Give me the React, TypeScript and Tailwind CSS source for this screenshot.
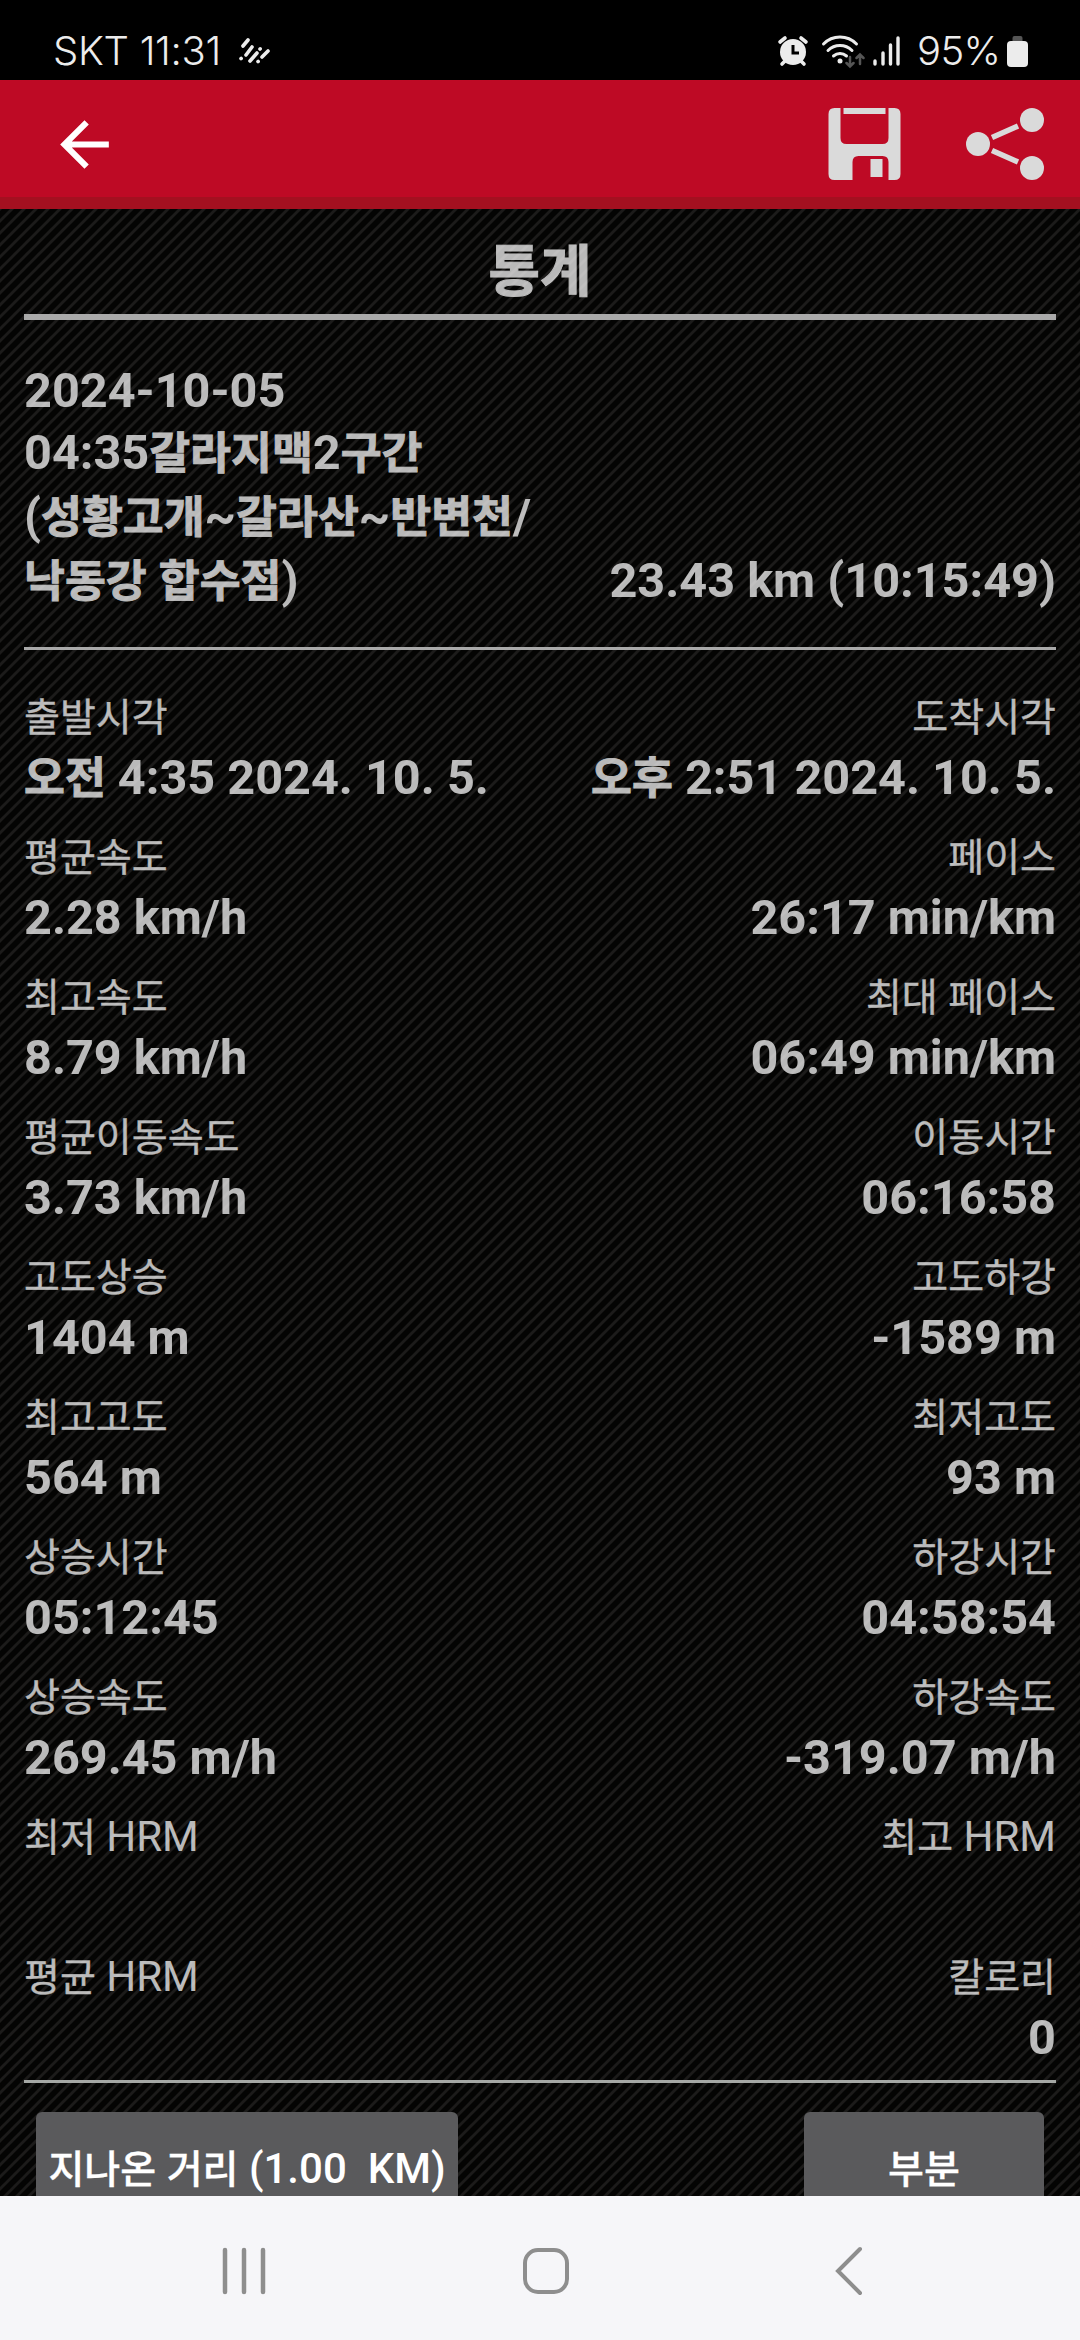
import React from 'react';

interface StatRow {
  left: string;
  leftValue: string;
  right: string;
  rightValue: string;
}

const rows: StatRow[] = [
  { left: '출발시각', leftValue: '오전 4:35 2024. 10. 5.', right: '도착시각', rightValue: '오후 2:51 2024. 10. 5.' },
  { left: '평균속도', leftValue: '2.28 km/h', right: '페이스', rightValue: '26:17 min/km' },
  { left: '최고속도', leftValue: '8.79 km/h', right: '최대 페이스', rightValue: '06:49 min/km' },
  { left: '평균이동속도', leftValue: '3.73 km/h', right: '이동시간', rightValue: '06:16:58' },
  { left: '고도상승', leftValue: '1404 m', right: '고도하강', rightValue: '-1589 m' },
  { left: '최고고도', leftValue: '564 m', right: '최저고도', rightValue: '93 m' },
  { left: '상승시간', leftValue: '05:12:45', right: '하강시간', rightValue: '04:58:54' },
  { left: '상승속도', leftValue: '269.45 m/h', right: '하강속도', rightValue: '-319.07 m/h' },
  { left: '최저 HRM', leftValue: '', right: '최고 HRM', rightValue: '' },
  { left: '평균 HRM', leftValue: '', right: '칼로리', rightValue: '0' },
];

// Hangul is set slightly smaller than the Latin text beside it
function Mixed({ text, heavy }: { text: string; heavy?: boolean }) {
  return (
    <>
      {text.split(/([가-힣]+)/).map((part, idx) =>
        idx % 2 === 1 ? (
          <span key={idx} className={heavy ? 'text-[0.915em] leading-none [-webkit-text-stroke:0.9px]' : 'text-[0.93em] leading-none [-webkit-text-stroke:0.3px]'}>
            {part}
          </span>
        ) : (
          part
        )
      )}
    </>
  );
}

function StatusBar() {
  return (
    <div className="flex h-20 shrink-0 items-center bg-black pt-[22px] pr-[52px] pl-[53px] font-['Inter','Noto_Sans_CJK_KR',sans-serif] text-[40px] leading-none font-light text-[#ececec]">
      <span className="w-[169px] shrink-0 tracking-[-0.3px] whitespace-nowrap">SKT 11:31</span>
      <svg className="ml-4 h-7 w-8" viewBox="0 0 32 28" fill="none" stroke="#ececec" strokeWidth="3.600" strokeLinecap="round">
        <path d="M5 9 10 3M8 18l6-8M3 21.600l.2-.2M12 24l7-8M22 12l.2-.2M20 24.600l.2-.2M24 20l6-6" />
      </svg>
      <div className="ml-auto flex items-center">
        {/* alarm */}
        <svg className="h-8 w-8" viewBox="0 0 32 32">
          <circle cx="16" cy="17" r="13" fill="#ececec" />
          <path d="M3 7l5-4M29 7l-5-4M5 29l3-3M27 29l-3-3" stroke="#ececec" strokeWidth="3.600" strokeLinecap="round" />
          <path d="M16 10v8h6" fill="none" stroke="#000" strokeWidth="3" />
        </svg>
        {/* wifi with traffic arrows */}
        <svg className="ml-3 h-9 w-11" viewBox="0 0 44 36" fill="none" strokeLinecap="round">
          <path d="M2.500 11a23 23 0 0 1 33 0M7 17.500a17 17 0 0 1 24 0M12.500 23a10 10 0 0 1 13 0" stroke="#ececec" strokeWidth="3" />
          <circle cx="19" cy="28" r="2.500" fill="#ececec" />
          <path d="M29 24v9M25.500 30l3.500 3.500 3.500-3.500M39 31v-9M35.500 25l3.500-3.500 3.500 3.500" stroke="#555" strokeWidth="2.500" />
        </svg>
        {/* signal */}
        <svg className="ml-2 h-8 w-7" viewBox="0 0 28 32" stroke="#ececec" strokeWidth="3.400" strokeLinecap="round">
          <path d="M2 26v3M10 18v11M17.500 10v19M25 3v26" />
        </svg>
        <span className="ml-4 w-[82px] shrink-0 tracking-[-0.6px] whitespace-nowrap">95%</span>
        <svg className="ml-2 h-8 w-[21px]" viewBox="0 0 21 32">
          <rect x="5.500" y="1" width="10" height="8" rx="2" fill="#555" />
          <rect y="6" width="21" height="26" rx="4" fill="#ececec" />
        </svg>
      </div>
    </div>
  );
}

function AppBar() {
  return (
    <header className="flex h-[129px] shrink-0 items-center border-b-[12px] border-[#a41020] bg-[#be0a25] pr-9 pl-12">
      <button className="mt-3 h-[73px] w-[73px]">
        <svg className="h-full w-full" viewBox="0 0 24 24" fill="#fff">
          <path d="M20 11H7.830l5.590-5.590L12 4l-8 8 8 8 1.410-1.410L7.830 13H20z" />
        </svg>
      </button>
      <button className="mt-[11px] ml-auto h-[72px] w-[73px]">
        <svg className="h-full w-full" viewBox="0 0 72 72" fill="#dadada">
          <path d="M6 0h6v30q0 6 6 6h36q6 0 6-6V0h6q6 0 6 6v60q0 6-6 6h-6V54q0-6-6-6H30q-6 0-6 6v18H6q-6 0-6-6V6q0-6 6-6z" />
          <path d="M15 0h42v6H15zM42 51h12v18H42z" />
        </svg>
      </button>
      <button className="mt-[11px] ml-[65px] h-[72px] w-[78px]">
        <svg className="h-full w-full" viewBox="0 0 78 72" fill="#dadada">
          <circle cx="12" cy="36" r="12" />
          <circle cx="66" cy="12" r="12" />
          <circle cx="66" cy="60" r="12" />
          <path d="M26 29.500 52 18M26 42.500 52 54" stroke="#dadada" strokeWidth="5.500" />
        </svg>
      </button>
    </header>
  );
}

function Stripes() {
  return (
    <svg className="absolute inset-0 h-full w-full">
      <defs>
        <pattern id="stripes" width="12" height="12" patternUnits="userSpaceOnUse">
          <rect width="12" height="12" fill="#040403" />
          <path d="M-3 3 3-3M-3 15 15-3M9 15l6-6" stroke="#1c1b1a" strokeWidth="2.800" />
        </pattern>
      </defs>
      <rect width="100%" height="100%" fill="url(#stripes)" />
    </svg>
  );
}

function Stat({ label, value, end }: { label: string; value: string; end?: boolean }) {
  return (
    <div className={`whitespace-nowrap opacity-72 ${end ? 'text-right' : 'text-left'}`}>
      <div className="h-[58px] text-[42px] leading-[60px]"><Mixed text={label} /></div>
      <div className="h-[82px] text-[48.6px] leading-[66px] font-bold"><Mixed text={value} heavy /></div>
    </div>
  );
}

function NavBar() {
  return (
    <nav className="flex h-36 shrink-0 items-center bg-[#f6f6f9] pt-1.5 pl-[220px]">
      <svg className="h-12 w-12" viewBox="0 0 48 48" stroke="#8e8e8e" strokeWidth="4.500" strokeLinecap="round">
        <path d="M5 3v42M24 3v42M43 3v42" />
      </svg>
      <svg className="ml-[254px] h-12 w-12" viewBox="0 0 48 48" fill="none" stroke="#8e8e8e" strokeWidth="4">
        <rect x="3" y="3" width="42" height="42" rx="13" />
      </svg>
      <svg className="ml-[264px] h-[50px] w-[30px]" viewBox="0 0 30 50" fill="none" stroke="#8e8e8e" strokeWidth="4" strokeLinecap="round">
        <path d="M26 3 4 25l22 22" />
      </svg>
    </nav>
  );
}

export default function App() {
  return (
    <div className="flex h-[2340px] w-[1080px] flex-col overflow-hidden bg-black font-['Roboto','Noto_Sans_CJK_KR',sans-serif]">
      <StatusBar />
      <AppBar />

      <main className="relative min-h-0 flex-1 overflow-hidden text-white">
        <Stripes />
        <div className="relative px-6">
          <h1 className="h-[105px] text-center text-[56px] leading-[126px] font-bold opacity-72 [-webkit-text-stroke:1px]">통계</h1>
          <div className="h-1.5 bg-[#a9a9a9]" />

          <section className="flex h-[327px] items-end justify-between pb-[34px] text-[48.6px] leading-16 font-bold whitespace-nowrap opacity-72">
            <div>
              <div className="leading-[60px]">2024-10-05</div>
              <div><Mixed text="04:35갈라지맥2구간" heavy /></div>
              <div><Mixed text="(성황고개~갈라산~반변천/" heavy /></div>
              <div><Mixed text="낙동강 합수점)" heavy /></div>
            </div>
            <div>23.43 km (10:15:49)</div>
          </section>
          <div className="h-[3px] bg-[#a9a9a9]" />

          <section className="h-[1430px] pt-[37px]">
            {rows.map((row) => (
              <div key={row.left} className="flex h-[140px] justify-between">
                <Stat label={row.left} value={row.leftValue} />
                <Stat label={row.right} value={row.rightValue} end />
              </div>
            ))}
          </section>
          <div className="h-[3px] bg-[#a5a8a5]" />

          <div className="flex justify-between px-3 pt-[29px] text-[42px] font-medium text-white">
            <button className="h-[113px] w-[422px] rounded-md bg-[#5a5a5c] whitespace-pre"><Mixed text="지나온 거리 (1.00  KM)" /></button>
            <button className="h-[113px] w-60 rounded-md bg-[#5a5a5c]"><Mixed text="부분" /></button>
          </div>
        </div>
      </main>

      <NavBar />
    </div>
  );
}
